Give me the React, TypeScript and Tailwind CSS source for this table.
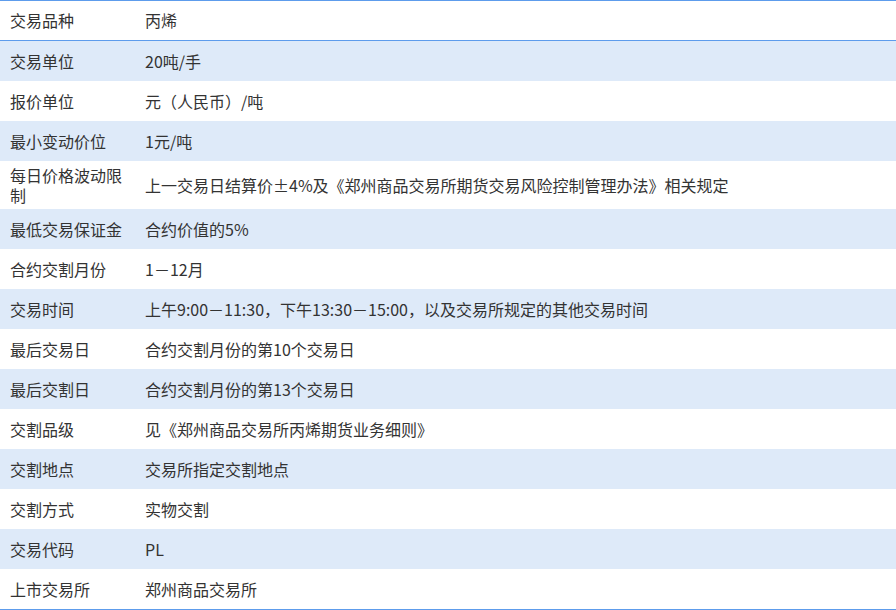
const rows: [string, string][] = [
  ["交易品种", "丙烯"],
  ["交易单位", "20吨/手"],
  ["报价单位", "元（人民币）/吨"],
  ["最小变动价位", "1元/吨"],
  ["每日价格波动限制", "上一交易日结算价±4%及《郑州商品交易所期货交易风险控制管理办法》相关规定"],
  ["最低交易保证金", "合约价值的5%"],
  ["合约交割月份", "1－12月"],
  ["交易时间", "上午9:00－11:30，下午13:30－15:00，以及交易所规定的其他交易时间"],
  ["最后交易日", "合约交割月份的第10个交易日"],
  ["最后交割日", "合约交割月份的第13个交易日"],
  ["交割品级", "见《郑州商品交易所丙烯期货业务细则》"],
  ["交割地点", "交易所指定交割地点"],
  ["交割方式", "实物交割"],
  ["交易代码", "PL"],
  ["上市交易所", "郑州商品交易所"],
];

export default function App() {
  return (
    <div className="w-[896px] h-[610px] bg-white overflow-hidden font-['Noto_Sans_CJK_SC','Noto_Sans',sans-serif] text-[16px] leading-[20px] text-[#333]">
      <div className="flex flex-col border-t border-b border-solid border-[#5d9cec]">
        {rows.map(([label, value], i) => (
          <div
            key={label}
            className={`flex items-center py-[4px] ${i % 2 === 1 ? "bg-[#deeaf9]" : "bg-white"} ${
              i === 0 ? "min-h-[40px] pb-[5px] border-b border-solid border-[#5d9cec]" : "min-h-[40px]"
            }`}
          >
            <div className="w-[135px] shrink-0 px-[10px]">{label}</div>
            <div className="flex-1 px-[10px]">{value}</div>
          </div>
        ))}
      </div>
    </div>
  );
}
